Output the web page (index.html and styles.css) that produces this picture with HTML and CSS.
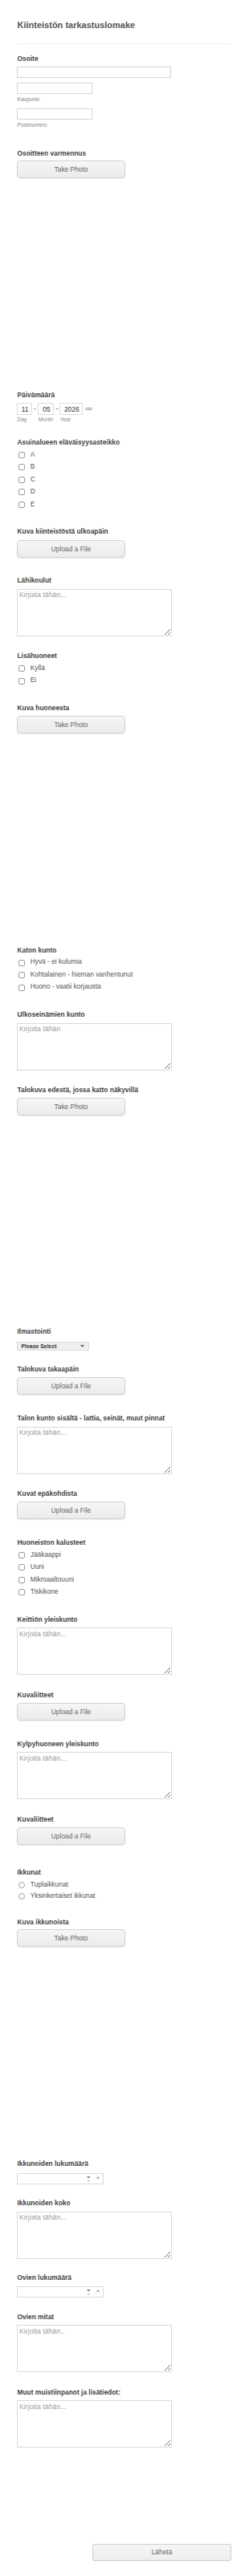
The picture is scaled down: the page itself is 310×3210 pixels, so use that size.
FILE: index.html
```html
<!DOCTYPE html>
<html lang="fi">
<head>
<meta charset="utf-8">
<title>Kiinteistön tarkastuslomake</title>
<link rel="stylesheet" href="styles.css">
</head>
<body>
<div class="page">
  <h1 class="title">Kiinteistön tarkastuslomake</h1>
  <div class="divider"></div>

  <form class="fields">
    <div class="field f-addr">
      <label class="lbl">Osoite</label>
      <input class="in in-wide" type="text">
      <div class="addr-part p1">
        <input class="in in-short" type="text">
        <span class="sub">Kaupunki</span>
      </div>
      <div class="addr-part p2">
        <input class="in in-short" type="text">
        <span class="sub">Postinumero</span>
      </div>
    </div>

    <div class="field f-photo">
      <label class="lbl">Osoitteen varmennus</label>
      <button type="button" class="btn">Take Photo</button>
    </div>

    <div class="field f-date">
      <label class="lbl">Päivämäärä</label>
      <div class="date">
        <div class="dcol"><span class="dbox d1">11</span><span class="sub">Day</span></div>
        <span class="dash">-</span>
        <div class="dcol"><span class="dbox d2">05</span><span class="sub">Month</span></div>
        <span class="dash">-</span>
        <div class="dcol"><span class="dbox d3">2026</span><span class="sub">Year</span></div>
        <span class="cal"></span>
      </div>
    </div>

    <div class="field f-check">
      <label class="lbl">Asuinalueen eläväisyysasteikko</label>
      <label class="opt"><input type="checkbox" class="cb"><span>A</span></label>
      <label class="opt"><input type="checkbox" class="cb"><span>B</span></label>
      <label class="opt"><input type="checkbox" class="cb"><span>C</span></label>
      <label class="opt"><input type="checkbox" class="cb"><span>D</span></label>
      <label class="opt"><input type="checkbox" class="cb"><span>E</span></label>
    </div>

    <div class="field f-upload">
      <label class="lbl">Kuva kiinteistöstä ulkoapäin</label>
      <button type="button" class="btn">Upload a File</button>
    </div>

    <div class="field f-text">
      <label class="lbl">Lähikoulut</label>
      <textarea class="ta" placeholder="Kirjoita tähän..."></textarea>
    </div>

    <div class="field f-check">
      <label class="lbl">Lisähuoneet</label>
      <label class="opt"><input type="checkbox" class="cb"><span>Kyllä</span></label>
      <label class="opt"><input type="checkbox" class="cb"><span>Ei</span></label>
    </div>

    <div class="field f-photo f-photo-b">
      <label class="lbl">Kuva huoneesta</label>
      <button type="button" class="btn">Take Photo</button>
    </div>

    <div class="field f-check">
      <label class="lbl">Katon kunto</label>
      <label class="opt"><input type="checkbox" class="cb"><span>Hyvä - ei kulumia</span></label>
      <label class="opt"><input type="checkbox" class="cb"><span>Kohtalainen - hieman vanhentunut</span></label>
      <label class="opt"><input type="checkbox" class="cb"><span>Huono - vaatii korjausta</span></label>
    </div>

    <div class="field f-text">
      <label class="lbl">Ulkoseinämien kunto</label>
      <textarea class="ta" placeholder="Kirjoita tähän"></textarea>
    </div>

    <div class="field f-photo">
      <label class="lbl">Talokuva edestä, jossa katto näkyvillä</label>
      <button type="button" class="btn">Take Photo</button>
    </div>

    <div class="field f-select">
      <label class="lbl">Ilmastointi</label>
      <div class="select">
        <span>Please Select</span>
        <svg class="chev" width="5" height="4" viewBox="0 0 5 4"><polyline points="0.6,0.8 2.5,2.8 4.4,0.8" fill="none" stroke="#333" stroke-width="1.1"/></svg>
      </div>
    </div>

    <div class="field f-upload">
      <label class="lbl">Talokuva takaapäin</label>
      <button type="button" class="btn">Upload a File</button>
    </div>

    <div class="field f-text">
      <label class="lbl">Talon kunto sisältä - lattia, seinät, muut pinnat</label>
      <textarea class="ta" placeholder="Kirjoita tähän..."></textarea>
    </div>

    <div class="field f-upload">
      <label class="lbl">Kuvat epäkohdista</label>
      <button type="button" class="btn">Upload a File</button>
    </div>

    <div class="field f-check">
      <label class="lbl">Huoneiston kalusteet</label>
      <label class="opt"><input type="checkbox" class="cb"><span>Jääkaappi</span></label>
      <label class="opt"><input type="checkbox" class="cb"><span>Uuni</span></label>
      <label class="opt"><input type="checkbox" class="cb"><span>Mikroaaltouuni</span></label>
      <label class="opt"><input type="checkbox" class="cb"><span>Tiskikone</span></label>
    </div>

    <div class="field f-text">
      <label class="lbl">Keittiön yleiskunto</label>
      <textarea class="ta" placeholder="Kirjoita tähän..."></textarea>
    </div>

    <div class="field f-upload">
      <label class="lbl">Kuvaliitteet</label>
      <button type="button" class="btn">Upload a File</button>
    </div>

    <div class="field f-text">
      <label class="lbl">Kylpyhuoneen yleiskunto</label>
      <textarea class="ta" placeholder="Kirjoita tähän..."></textarea>
    </div>

    <div class="field f-upload f-upload-wide">
      <label class="lbl">Kuvaliitteet</label>
      <button type="button" class="btn">Upload a File</button>
    </div>

    <div class="field f-radio">
      <label class="lbl">Ikkunat</label>
      <label class="opt"><input type="radio" name="ikkunat" class="rb"><span>Tuplaikkunat</span></label>
      <label class="opt"><input type="radio" name="ikkunat" class="rb"><span>Yksinkertaiset ikkunat</span></label>
    </div>

    <div class="field f-photo f-photo-b">
      <label class="lbl">Kuva ikkunoista</label>
      <button type="button" class="btn">Take Photo</button>
    </div>

    <div class="field f-num">
      <label class="lbl">Ikkunoiden lukumäärä</label>
      <div class="num">
        <input type="text" class="num-in">
        <svg class="spin" width="20" height="12" viewBox="0 0 20 12"><polygon points="2,3.2 6.6,3.2 4.3,5.6" fill="#666"/><polyline points="3.3,8 4.3,9.2 5.3,8" fill="none" stroke="#9a7a3c" stroke-width="0.8"/><polygon points="13.9,5.6 18.1,5.6 16,3.2" fill="#888"/></svg>
      </div>
    </div>

    <div class="field f-text f-text-s">
      <label class="lbl">Ikkunoiden koko</label>
      <textarea class="ta" placeholder="Kirjoita tähän..."></textarea>
    </div>

    <div class="field f-num">
      <label class="lbl">Ovien lukumäärä</label>
      <div class="num">
        <input type="text" class="num-in">
        <svg class="spin" width="20" height="12" viewBox="0 0 20 12"><polygon points="2,3.2 6.6,3.2 4.3,5.6" fill="#666"/><polyline points="3.3,8 4.3,9.2 5.3,8" fill="none" stroke="#9a7a3c" stroke-width="0.8"/><polygon points="13.9,5.6 18.1,5.6 16,3.2" fill="#888"/></svg>
      </div>
    </div>

    <div class="field f-text">
      <label class="lbl">Ovien mitat</label>
      <textarea class="ta" placeholder="Kirjoita tähän.."></textarea>
    </div>

    <div class="field f-text f-last">
      <label class="lbl">Muut muistiinpanot ja lisätiedot:</label>
      <textarea class="ta" placeholder="Kirjoita tähän..."></textarea>
    </div>

    <div class="submit-row">
      <button type="submit" class="submit">Lähetä</button>
    </div>
  </form>
</div>
</body>
</html>
```

FILE: styles.css
```css
html, body {
  margin: 0;
  padding: 0;
  background: #ffffff;
}

body {
  font-family: "Liberation Sans", Arial, sans-serif;
  color: #555555;
}

.page {
  padding: 24px 22px 18px 21px;
}

.title {
  margin: 0;
  padding-left: 0.5px;
  font-size: 11px;
  line-height: 14px;
  font-weight: bold;
  color: #555555;
}

.divider {
  margin-top: 15.5px;
  border-top: 1px solid #ececec;
}

.fields {
  margin: 12.2px 0 0 0;
  display: flex;
  flex-direction: column;
}

.field {
  display: flex;
  flex-direction: column;
  align-items: flex-start;
}

.lbl {
  display: block;
  padding-left: 0.5px;
  font-size: 8.4px;
  line-height: 12px;
  font-weight: bold;
  color: #444444;
  margin-bottom: 4px;
}

.sub {
  display: block;
  font-size: 6.6px;
  line-height: 9px;
  color: #888888;
  padding-left: 0.5px;
}

/* text inputs */
.in {
  box-sizing: border-box;
  height: 14px;
  margin: 0;
  padding: 0 2px;
  border: 1px solid #d6d6d6;
  background: #fff;
  font-family: inherit;
  font-size: 8.4px;
  outline: none;
}

.in-wide {
  width: 191.5px;
}

.in-short {
  width: 94px;
}

.f-addr .lbl {
  margin-bottom: 4.3px;
}

.addr-part {
  display: flex;
  flex-direction: column;
}

.addr-part .sub {
  margin-top: 1.3px;
}

.addr-part.p1 {
  margin-top: 6.3px;
}

.addr-part.p2 {
  margin-top: 7.7px;
}

.f-addr {
  margin-bottom: 25.2px;
}

/* buttons */
.btn {
  box-sizing: border-box;
  width: 135px;
  height: 22px;
  margin: 0;
  padding: 0;
  border: 1px solid #d2d2d2;
  border-radius: 4px;
  background: linear-gradient(#f6f6f6, #ebebeb);
  box-shadow: 0 1px 1px rgba(0, 0, 0, 0.08);
  font-family: inherit;
  font-size: 8.4px;
  color: #666666;
  cursor: pointer;
}

.f-photo .lbl {
  margin-bottom: 3.4px;
}

.f-photo {
  margin-bottom: 263.6px;
}

.f-photo-b {
  margin-bottom: 264.4px;
}

.f-upload .lbl {
  margin-bottom: 4.3px;
}

.f-upload {
  margin-bottom: 22.7px;
}

.f-upload-wide {
  margin-bottom: 27.7px;
}

/* date */
.f-date .lbl {
  margin-bottom: 4.3px;
}

.date {
  display: flex;
  align-items: flex-start;
}

.dcol {
  display: flex;
  flex-direction: column;
}

.dcol .sub {
  margin-top: 1px;
}

.dbox {
  box-sizing: border-box;
  display: flex;
  align-items: center;
  justify-content: center;
  height: 15px;
  padding-left: 1.5px;
  border: 1px solid #dcdcdc;
  font-size: 8.4px;
  color: #333333;
}

.d1 { width: 18.7px; }
.d2 { width: 20px; }
.d3 { width: 28.4px; }

.dash {
  width: 7.6px;
  height: 15px;
  line-height: 15px;
  text-align: center;
  font-size: 8.4px;
  color: #555555;
}

.dash + .dcol + .dash {
  width: 7px;
}

.cal {
  box-sizing: border-box;
  width: 9.5px;
  height: 3.5px;
  margin: 5.7px 0 0 3px;
  border: 1px solid #9a9a9a;
  border-radius: 2px;
}

.f-date {
  margin-bottom: 18px;
}

/* checkbox & radio options */
.opt {
  display: flex;
  align-items: center;
  gap: 6.4px;
  padding-left: 2.3px;
  height: 15.5px;
  font-size: 8.4px;
  color: #555555;
}

.opt span {
  position: relative;
  top: -0.7px;
}

.cb, .rb {
  -webkit-appearance: none;
  appearance: none;
  box-sizing: border-box;
  width: 8px;
  height: 8px;
  margin: 0;
  border: 1px solid #9a9a9a;
  background: #fff;
  flex: none;
  position: relative;
  top: 0.6px;
}

.cb {
  border-radius: 2px;
}

.rb {
  border-radius: 50%;
  border-color: #a0a0a0;
}

.f-check .lbl {
  margin-bottom: 1.5px;
}

.f-check {
  margin-bottom: 20.3px;
}

.f-radio .lbl {
  margin-bottom: 3px;
}

.f-radio .opt {
  height: 14px;
}

.f-radio {
  margin-bottom: 18.7px;
}

/* textareas */
.ta {
  box-sizing: border-box;
  display: block;
  width: 193px;
  height: 59px;
  margin: 0;
  padding: 1.5px 2px;
  border: 1px solid #d9d9d9;
  background: #fff;
  font-family: inherit;
  font-size: 8.8px;
  line-height: 10px;
  color: #333;
  outline: none;
}

.ta::placeholder {
  color: #9c9c9c;
}

.f-text .lbl {
  margin-bottom: 4.5px;
}

.f-text {
  margin-bottom: 18.5px;
}

.f-text-s {
  margin-bottom: 17.5px;
}

.f-last {
  margin-bottom: 0;
}

/* select */
.f-select .lbl {
  margin-bottom: 6.4px;
}

.select {
  box-sizing: border-box;
  width: 90.4px;
  height: 11.6px;
  display: flex;
  align-items: center;
  justify-content: space-between;
  padding: 0 5px 0 4.5px;
  border: 1px solid #dddddd;
  background: #efefef;
  font-size: 6.9px;
  font-weight: bold;
  color: #333333;
}

.f-select {
  margin-bottom: 17px;
}

/* number */
.f-num .lbl {
  margin-bottom: 5.3px;
}

.num {
  box-sizing: border-box;
  width: 108.4px;
  height: 14px;
  display: flex;
  align-items: flex-start;
  border: 1px solid #dadada;
  background: #fff;
}

.num-in {
  flex: 1;
  min-width: 0;
  height: 100%;
  border: none;
  margin: 0;
  padding: 0 2px;
  font-family: inherit;
  font-size: 8.4px;
  outline: none;
  background: transparent;
}

.spin {
  flex: none;
  margin-right: 2px;
}

.f-num {
  margin-bottom: 17.5px;
}

/* submit */
.submit-row {
  display: flex;
  justify-content: flex-end;
  margin-top: 119.2px;
}

.submit {
  box-sizing: border-box;
  width: 172.4px;
  height: 21.6px;
  margin: 0 0.3px 0 0;
  padding: 0;
  border: 1px solid #cfcfcf;
  border-radius: 2px;
  background: linear-gradient(#f5f5f5, #eeeeee);
  box-shadow: 0 1px 1px rgba(0, 0, 0, 0.06);
  font-family: inherit;
  font-size: 8.4px;
  color: #666666;
  cursor: pointer;
}
```
